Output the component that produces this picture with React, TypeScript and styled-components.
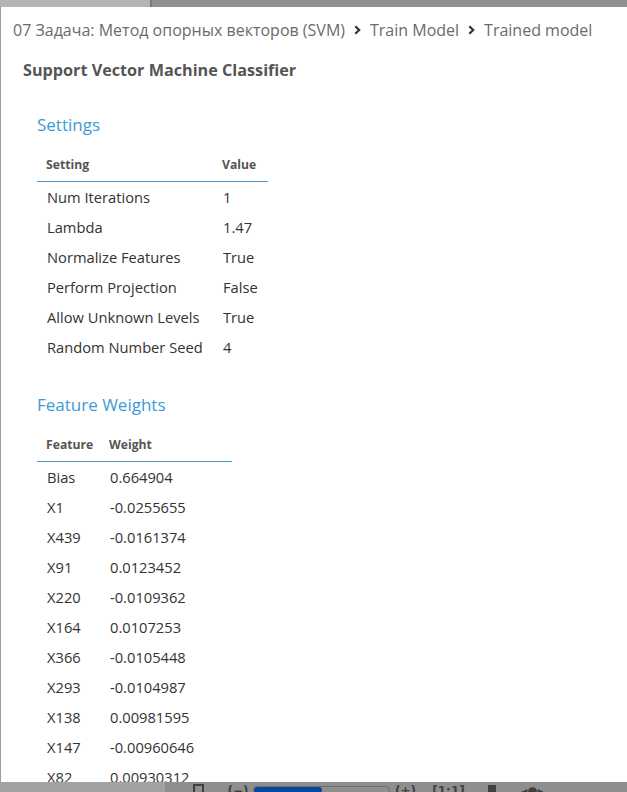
import styled, { createGlobalStyle } from "styled-components";

const GlobalStyle = createGlobalStyle`
  html, body {
    margin: 0;
    padding: 0;
    width: 627px;
    height: 792px;
    overflow: hidden;
    background: #8f8f8f;
    font-family: "Open Sans", "Noto Sans", sans-serif;
  }
`;

const Screen = styled.div`
  width: 627px;
  height: 792px;
  display: flex;
  flex-direction: column;
  overflow: hidden;
  background: #8f8f8f;
`;

const TopStrip = styled.div`
  height: 7px;
  flex: none;
  display: flex;
`;

const TopTab = styled.div`
  width: 150px;
  background: #b4b4b4;
  border-right: 2px solid #7a7a7a;
`;

const Middle = styled.div`
  flex: 1;
  min-height: 0;
  display: flex;
  background: #9c9c9c;
  padding-left: 1px;
`;

const Dialog = styled.div`
  flex: 1;
  background: #ffffff;
  overflow: hidden;
  padding: 9px 0 0 12px;
`;

const Breadcrumb = styled.div`
  display: flex;
  align-items: center;
  gap: 9px;
  font-size: 16px;
  color: #6b6b6b;
  white-space: nowrap;
  height: 28px;
`;

const Chevron = () => (
  <svg width="7" height="10" viewBox="0 0 7 10">
    <path d="M1.3 1.2 L5.2 5 L1.3 8.8" fill="none" stroke="#333" strokeWidth="2.2" />
  </svg>
);

const Title = styled.h1`
  margin: 15px 0 0 10px;
  font-size: 16.2px;
  line-height: 22px;
  font-weight: 700;
  color: #555555;
`;

const Section = styled.section<{ $top: number }>`
  padding-left: 24px;
  margin-top: ${(p) => p.$top}px;
`;

const Heading = styled.h2`
  margin: 0 0 20px 0;
  font-size: 17px;
  line-height: 23px;
  font-weight: 400;
  color: #3d9ad6;
`;

const Table = styled.table<{ $width: number }>`
  border-collapse: collapse;
  table-layout: fixed;
  width: ${(p) => p.$width}px;
  font-size: 14.7px;
  color: #333333;
`;

const Col = styled.col<{ $w: number }>`
  width: ${(p) => p.$w}px;
`;

const Th = styled.th`
  text-align: left;
  font-weight: 700;
  font-size: 12.2px;
  line-height: 18px;
  color: #555555;
  padding: 0 9px 7px 9px;
  border-bottom: 1px solid #4c97c8;
  white-space: nowrap;
`;

const Td = styled.td`
  height: 30px;
  padding: 0 10px;
  white-space: nowrap;
  vertical-align: middle;
`;

const BottomBar = styled.div`
  height: 10px;
  flex: none;
  display: flex;
`;

const BarLeft = styled.div`
  width: 165px;
  background: #a2a2a2;
`;

const BarRight = styled.div`
  flex: 1;
  background: #8e8e8e;
  display: flex;
  align-items: flex-start;
  padding-top: 2px;
  color: #404040;
  font-size: 12px;
  font-weight: 700;
  font-family: "DejaVu Sans", sans-serif;
  line-height: 14px;
`;

const Control = styled.span<{ $ml: number; $w: number }>`
  margin-left: ${(p) => p.$ml}px;
  width: ${(p) => p.$w}px;
  flex: none;
  display: flex;
  justify-content: center;
  height: 14px;
  white-space: nowrap;
`;

const Track = styled.div`
  width: 100%;
  height: 8px;
  box-sizing: border-box;
  border: 1px solid #6f6f6f;
  border-radius: 5px;
  margin-top: 2px;
  background: #8e8e8e;
`;

const Fill = styled.div`
  height: 100%;
  background: #0a47a0;
  border-radius: 5px;
`;

const settings = [
  ["Num Iterations", "1"],
  ["Lambda", "1.47"],
  ["Normalize Features", "True"],
  ["Perform Projection", "False"],
  ["Allow Unknown Levels", "True"],
  ["Random Number Seed", "4"],
];

const weights = [
  ["Bias", "0.664904"],
  ["X1", "-0.0255655"],
  ["X439", "-0.0161374"],
  ["X91", "0.0123452"],
  ["X220", "-0.0109362"],
  ["X164", "0.0107253"],
  ["X366", "-0.0105448"],
  ["X293", "-0.0104987"],
  ["X138", "0.00981595"],
  ["X147", "-0.00960646"],
  ["X82", "0.00930312"],
  ["X17", "-0.00912774"],
];

export default function App() {
  const zoom = 50;
  return (
    <>
      <GlobalStyle />
      <Screen>
        <TopStrip>
          <TopTab />
        </TopStrip>
        <Middle>
          <Dialog>
            <Breadcrumb>
              <span>07 Задача: Метод опорных векторов (SVM)</span>
              <Chevron />
              <span>Train Model</span>
              <Chevron />
              <span>Trained model</span>
            </Breadcrumb>
            <Title>Support Vector Machine Classifier</Title>
            <Section $top={32}>
              <Heading>Settings</Heading>
              <Table $width={231}>
                <colgroup>
                  <Col $w={176} />
                  <Col $w={55} />
                </colgroup>
                <thead>
                  <tr>
                    <Th>Setting</Th>
                    <Th>Value</Th>
                  </tr>
                </thead>
                <tbody>
                  {settings.map(([k, v]) => (
                    <tr key={k}>
                      <Td>{k}</Td>
                      <Td>{v}</Td>
                    </tr>
                  ))}
                </tbody>
              </Table>
            </Section>
            <Section $top={31}>
              <Heading>Feature Weights</Heading>
              <Table $width={195}>
                <colgroup>
                  <Col $w={63} />
                  <Col $w={132} />
                </colgroup>
                <thead>
                  <tr>
                    <Th>Feature</Th>
                    <Th>Weight</Th>
                  </tr>
                </thead>
                <tbody>
                  {weights.map(([k, v]) => (
                    <tr key={k}>
                      <Td>{k}</Td>
                      <Td>{v}</Td>
                    </tr>
                  ))}
                </tbody>
              </Table>
            </Section>
          </Dialog>
        </Middle>
        <BottomBar>
          <BarLeft />
          <BarRight>
            <Control $ml={28} $w={11}>
              <svg width="11" height="11" viewBox="0 0 11 11">
                <rect x="1" y="1" width="9" height="9" fill="none" stroke="#404040" strokeWidth="2" />
              </svg>
            </Control>
            <Control $ml={22} $w={24}>(−)</Control>
            <Control $ml={3} $w={137}>
              <Track>
                <Fill style={{ width: `${zoom}%` }} />
              </Track>
            </Control>
            <Control $ml={3} $w={25}>(+)</Control>
            <Control $ml={17} $w={27}>[1:1]</Control>
            <Control $ml={26} $w={8}>
              <svg width="8" height="9" viewBox="0 0 8 9">
                <rect x="0" y="1" width="8" height="8" fill="#404040" />
              </svg>
            </Control>
            <Control $ml={26} $w={21}>◂●▸</Control>
          </BarRight>
        </BottomBar>
      </Screen>
    </>
  );
}
